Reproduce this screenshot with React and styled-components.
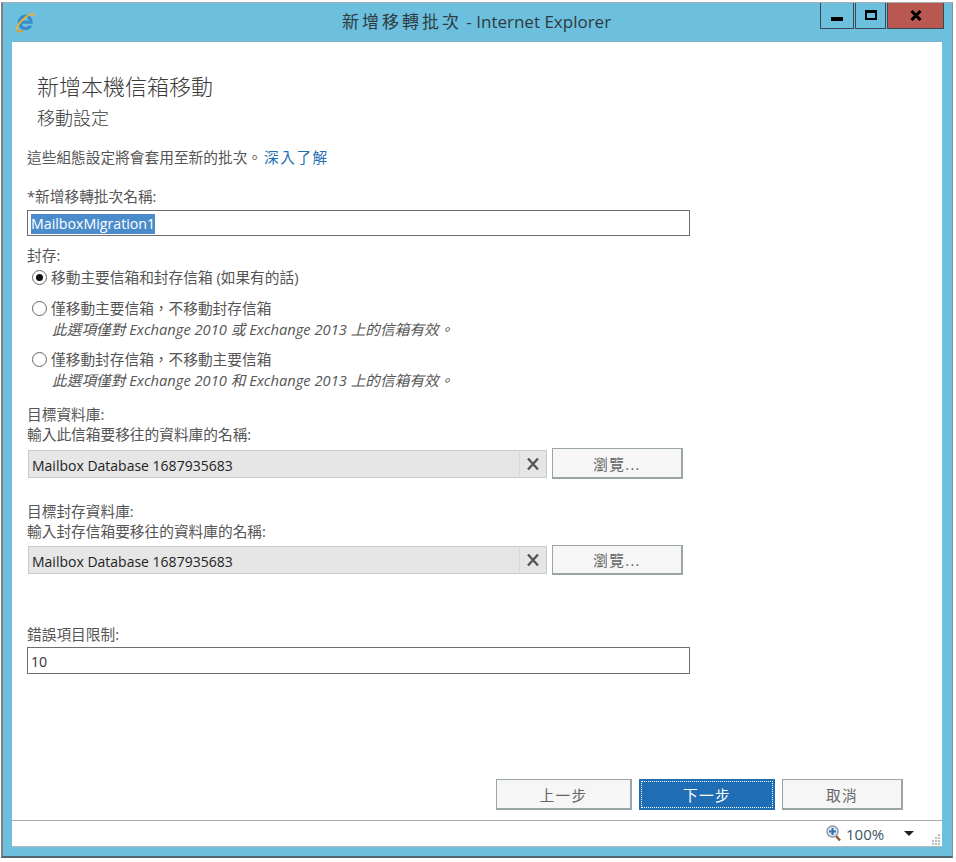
import React from 'react';
import styled, { createGlobalStyle } from 'styled-components';

const GlobalStyle = createGlobalStyle`
  html, body { margin: 0; padding: 0; background: #fff; }
  body { font-family: "Open Sans", "Noto Sans CJK TC", sans-serif; }
`;

const Page = styled.div`
  width: 956px;
  height: 862px;
  box-sizing: border-box;
  padding: 2px 3px 4px 1px;
  display: flex;
`;

const Frame = styled.div`
  flex: 1;
  display: flex;
  flex-direction: column;
  background: #6cc0de;
  border: 1px solid #8b8f92;
  border-top: 1px solid #a9acae;
  border-left: 2px solid #7c8083;
  border-bottom: 2px solid #51666f;
`;

const TitleBar = styled.div`
  height: 38px;
  display: flex;
  position: relative;
  flex: none;
`;

const TitleIcon = styled.svg`
  width: 20px;
  height: 21px;
  margin: 9px 0 0 12px;
`;

const Title = styled.div`
  position: absolute;
  left: 0;
  right: 0;
  top: 7px;
  text-align: center;
  padding-right: 2px;
  font-size: 17px;
  line-height: 24px;
  color: #2f3b40;
`;

const TitleCjk = styled.span`
  letter-spacing: 3px;
`;

const Controls = styled.div`
  margin-left: auto;
  margin-right: 8px;
  display: flex;
  height: 26px;
  gap: 1px;
`;

const ControlBtn = styled.div`
  width: ${({ $w }) => $w}px;
  display: flex;
  align-items: center;
  justify-content: center;
  box-sizing: border-box;
  border: 1px solid #3c4a50;
  border-top: none;
  background: ${({ $close }) => ($close ? '#b95751' : 'transparent')};
`;

const MinGlyph = styled.span`
  width: 12px;
  height: 4px;
  background: #000;
  margin-top: 7px;
`;

const MaxGlyph = styled.span`
  width: 12px;
  height: 10px;
  box-sizing: border-box;
  border: 3px solid #000;
  border-width: 3px 2px 2px 2px;
  margin-bottom: 1px;
`;

const Body = styled.div`
  flex: 1;
  margin: 0 10px 9px 9px;
  display: flex;
  flex-direction: column;
  min-height: 0;
`;

const Content = styled.div`
  flex: 1;
  background: #fff;
  border-top: 1px solid #7fb1c8;
  padding: 0 0 10px 15px;
  display: flex;
  flex-direction: column;
  color: #555;
  font-size: 14.7px;
`;

const Heading = styled.h1`
  margin: 29px 0 0 10px;
  font-size: 22px;
  font-weight: 300;
  line-height: 30px;
  color: #3a3a3a;
`;

const SubHeading = styled.h2`
  margin: 4px 0 0 10px;
  font-size: 18px;
  font-weight: 300;
  line-height: 26px;
  color: #3a3a3a;
`;

const Text = styled.div`
  line-height: 20px;
  margin-top: ${({ $top }) => $top || 0}px;
  white-space: nowrap;
`;

const LearnLink = styled.a`
  color: #1f70b5;
  text-decoration: none;
  letter-spacing: 1.5px;
  margin-left: 2px;
`;

const TextBox = styled.div`
  width: 663px;
  height: ${({ $h }) => $h}px;
  box-sizing: border-box;
  margin-top: ${({ $top }) => $top || 0}px;
  border: 1px solid #6f6f6f;
  padding: 2px 0 0 3px;
  display: flex;
  align-items: center;
  color: #333;
  font-size: 14.2px;
`;

const Selected = styled.span`
  background: #4a8ccb;
  color: #fff;
  line-height: 20px;
`;

const RadioRow = styled.div`
  display: flex;
  align-items: center;
  gap: 4px;
  margin: ${({ $top }) => $top || 0}px 0 0 5px;
  line-height: 20px;
  white-space: nowrap;
`;

const RadioMark = styled.span`
  width: 15px;
  height: 15px;
  box-sizing: border-box;
  border-radius: 50%;
  border: 1px solid #666;
  display: flex;
  align-items: center;
  justify-content: center;
  flex: none;
  &::after {
    content: '';
    width: 7px;
    height: 7px;
    border-radius: 50%;
    background: ${({ $on }) => ($on ? '#111' : 'transparent')};
  }
`;

const Hint = styled.div`
  margin: 1px 0 0 25px;
  line-height: 20px;
  font-style: italic;
  font-size: 14.7px;
  white-space: nowrap;
`;

const PickerRow = styled.div`
  display: flex;
  align-items: center;
  gap: 5px;
  margin: 4px 0 0 1px;
`;

const Picker = styled.div`
  width: 519px;
  height: 28px;
  box-sizing: border-box;
  display: flex;
  background: #e6e6e6;
  border: 1px solid #c6cccc;
  color: #222;
  font-size: 14px;
`;

const PickerValue = styled.div`
  flex: 1;
  line-height: 30px;
  padding-left: 3px;
`;

const ClearBtn = styled.div`
  width: 26px;
  display: flex;
  align-items: center;
  justify-content: center;
  border-left: 1px solid #d6d9d9;
`;

const Btn = styled.div`
  width: ${({ $w }) => $w}px;
  height: ${({ $h }) => $h || 31}px;
  box-sizing: border-box;
  display: flex;
  align-items: center;
  justify-content: center;
  background: #f6f6f6;
  border: 1px solid #9aa5a5;
  border-width: 1px 2px 2px 1px;
  color: #666;
  font-size: 14.7px;
  letter-spacing: 1.3px;
`;

const PrimaryBtn = styled(Btn)`
  background: #1f6db5;
  border: none;
  color: #fff;
  position: relative;
  &::after {
    content: '';
    position: absolute;
    inset: 2px;
    border: 1px dotted #fff;
  }
`;

const Actions = styled.div`
  margin-top: auto;
  display: flex;
  gap: 7px;
  padding-left: 469px;
`;

const StatusBar = styled.div`
  height: 27px;
  flex: none;
  box-sizing: border-box;
  background: #fff;
  border-top: 1px solid #a8acac;
  border-bottom: 1px solid #b5b9ba;
  display: flex;
  align-items: center;
  position: relative;
`;

const Zoom = styled.div`
  margin-left: 814px;
  display: flex;
  align-items: center;
  gap: 4px;
  font-size: 15px;
  color: #3e5566;
`;

const Caret = styled.span`
  width: 0;
  height: 0;
  margin-left: 20px;
  border: 5px solid transparent;
  border-top: 5px solid #222;
  border-bottom: none;
`;

const Grip = styled.svg`
  position: absolute;
  right: 1px;
  bottom: 1px;
`;

const IeIcon = () => (
  <TitleIcon viewBox="0 0 20 21">
    <path d="M10.500 2.500a7.800 7.800 0 1 0 7 11.300h-4.300a3.500 3.500 0 0 1-6.200-2h10.700c.6-5-2.600-9.300-7.200-9.300zM7 8.600a3.500 3.500 0 0 1 6.900 0z" fill="#3b8ccb" fillRule="evenodd" />
    <path d="M1.500 18.500C1 14 8.500 5.500 15 2.500c2.700-1.200 4.300-.6 4 1.500" fill="none" stroke="#eeb52c" strokeWidth="1.800" />
    <path d="M1.500 18.500c1.200 1.600 4.500 1 7-.3" fill="none" stroke="#d99a35" strokeWidth="1.600" />
  </TitleIcon>
);

const CrossIcon = () => (
  <svg width="14" height="14" viewBox="0 0 14 14">
    <path d="M2 1.500 12 12.500M12 1.500 2 12.500" stroke="#555" strokeWidth="2.400" />
  </svg>
);

const CrossMark = () => (
  <svg width="12" height="11" viewBox="0 0 12 11">
    <path d="M1.500 1 10.500 10M10.500 1 1.500 10" stroke="#000" strokeWidth="3" />
  </svg>
);

const ZoomIcon = () => (
  <svg width="16" height="17" viewBox="0 0 16 17">
    <path d="M10 11l4 4.500" stroke="#8a5a32" strokeWidth="2.400" />
    <circle cx="6.500" cy="6.500" r="5.500" fill="#dfe6ee" stroke="#8c97a3" strokeWidth="1.400" />
    <path d="M6.500 3v7M3 6.500h7" stroke="#2c6fb3" strokeWidth="2" />
  </svg>
);

const ResizeGrip = () => (
  <Grip width="10" height="11" viewBox="0 0 10 11">
    {[[8, 1], [8, 4], [5, 4], [8, 7], [5, 7], [2, 7], [8, 10], [5, 10], [2, 10]].map(([x, y]) => (
      <rect key={`${x}-${y}`} x={x - 1} y={y - 1} width="2" height="2" fill="#b9bcbc" />
    ))}
  </Grip>
);

const DatabasePicker = ({ value, browseHeight }) => (
  <PickerRow>
    <Picker>
      <PickerValue>{value}</PickerValue>
      <ClearBtn><CrossIcon /></ClearBtn>
    </Picker>
    <Btn $w={131} $h={browseHeight}>瀏覽...</Btn>
  </PickerRow>
);

const App = () => (
  <Page lang="zh-Hant">
    <GlobalStyle />
    <Frame>
      <TitleBar>
        <IeIcon />
        <Title><TitleCjk>新增移轉批次</TitleCjk> - Internet Explorer</Title>
        <Controls>
          <ControlBtn $w={34}><MinGlyph /></ControlBtn>
          <ControlBtn $w={31}><MaxGlyph /></ControlBtn>
          <ControlBtn $w={57} $close><CrossMark /></ControlBtn>
        </Controls>
      </TitleBar>
      <Body>
        <Content>
          <Heading>新增本機信箱移動</Heading>
          <SubHeading>移動設定</SubHeading>
          <Text $top={16}>這些組態設定將會套用至新的批次。<LearnLink href="#">深入了解</LearnLink></Text>
          <Text $top={19}>*新增移轉批次名稱:</Text>
          <TextBox $h={26} $top={4}><Selected>MailboxMigration1</Selected></TextBox>
          <Text $top={9}>封存:</Text>
          <RadioRow $top={2}><RadioMark $on />移動主要信箱和封存信箱 (如果有的話)</RadioRow>
          <RadioRow $top={11}><RadioMark />僅移動主要信箱&#xFF0C;不移動封存信箱</RadioRow>
          <Hint>此選項僅對 Exchange 2010 或 Exchange 2013 上的信箱有效。</Hint>
          <RadioRow $top={10}><RadioMark />僅移動封存信箱&#xFF0C;不移動主要信箱</RadioRow>
          <Hint>此選項僅對 Exchange 2010 和 Exchange 2013 上的信箱有效。</Hint>
          <Text $top={14}>目標資料庫:</Text>
          <Text>輸入此信箱要移往的資料庫的名稱:</Text>
          <DatabasePicker value="Mailbox Database 1687935683" browseHeight={31} />
          <Text $top={22}>目標封存資料庫:</Text>
          <Text>輸入封存信箱要移往的資料庫的名稱:</Text>
          <DatabasePicker value="Mailbox Database 1687935683" browseHeight={30} />
          <Text $top={49}>錯誤項目限制:</Text>
          <TextBox $h={27} $top={3}>10</TextBox>
          <Actions>
            <Btn $w={136}>上一步</Btn>
            <PrimaryBtn $w={136}>下一步</PrimaryBtn>
            <Btn $w={121}>取消</Btn>
          </Actions>
        </Content>
        <StatusBar>
          <Zoom><ZoomIcon />100%</Zoom>
          <Caret />
          <ResizeGrip />
        </StatusBar>
      </Body>
    </Frame>
  </Page>
);

export default App;
